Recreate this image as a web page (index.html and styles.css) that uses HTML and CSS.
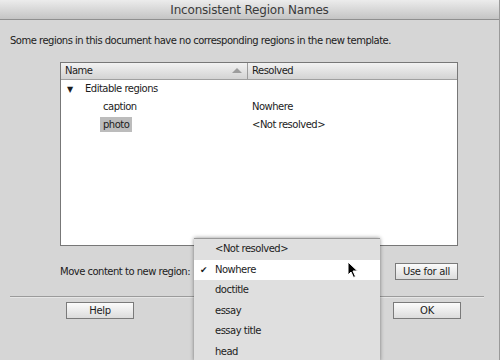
FILE: index.html
```html
<!DOCTYPE html>
<html lang="en">
<head>
    <meta charset="UTF-8">
    <title>Inconsistent Region Names</title>
    <link rel="stylesheet" href="styles.css">
</head>
<body>

<div class="dialog">
    <div class="titlebar">Inconsistent Region Names</div>

    <div class="content">
        <p class="message">Some regions in this document have no corresponding regions in the new template.</p>

        <div class="region-table">
            <div class="table-head">
                <div class="col-name">Name <span class="sort-arrow"></span></div>
                <div class="col-resolved">Resolved</div>
            </div>
            <div class="row group">
                <div class="col-name"><span class="disclosure">&#9660;</span>Editable regions</div>
            </div>
            <div class="row">
                <div class="col-name child">caption</div>
                <div class="col-resolved">Nowhere</div>
            </div>
            <div class="row">
                <div class="col-name child"><span class="selected">photo</span></div>
                <div class="col-resolved">&lt;Not resolved&gt;</div>
            </div>
        </div>

        <div class="move-row">
            <span class="move-label">Move content to new region:</span>
            <button class="btn btn-use">Use for all</button>
        </div>
    </div>

    <div class="separator"></div>

    <div class="footer">
        <button class="btn">Help</button>
        <button class="btn">OK</button>
    </div>
</div>

<!-- popup menu opened from the region select -->
<ul class="popup-menu">
    <li>&lt;Not resolved&gt;</li>
    <li class="checked"><span class="check">&#10004;</span>Nowhere</li>
    <li>doctitle</li>
    <li>essay</li>
    <li>essay title</li>
    <li>head</li>
</ul>

<svg class="cursor" width="12" height="18" viewBox="0 0 12 18">
    <path d="M1 1 L1 14 L4 11 L6.5 16.5 L8.5 15.5 L6 10 L10.5 10 Z" fill="#000" stroke="#fff" stroke-width="1"/>
</svg>

</body>
</html>
```

FILE: styles.css
```css
body {
    margin: 0;
    width: 500px;
    height: 360px;
    overflow: hidden;
    position: relative;
    background: #d6d6d6;
    font-family: "DejaVu Sans", sans-serif;
    font-size: 10px;
    letter-spacing: -0.5px;
    color: #1c1c1c;
}

.dialog {
    height: 360px;
    border-right: 1px solid #9a9a9a;
    box-sizing: border-box;
}

.titlebar {
    height: 20px;
    line-height: 21px;
    text-align: center;
    font-size: 12px;
    letter-spacing: -0.2px;
    color: #3a3a3a;
    background: linear-gradient(to bottom, #ececec, #c4c4c4);
    border-bottom: 1px solid #8f8f8f;
    box-sizing: border-box;
}

.content {
    padding: 14px 0 0 0;
}

.message {
    margin: 0 0 0 10px;
    line-height: 14px;
}

.region-table {
    margin: 14px 0 0 60px;
    width: 398px;
    height: 184px;
    background: #fff;
    border: 1px solid #777;
    box-sizing: border-box;
}

.table-head {
    display: flex;
    height: 17px;
    line-height: 16px;
    background: linear-gradient(to bottom, #f2f2f2, #d3d3d3);
    border-bottom: 1px solid #a0a0a0;
    box-sizing: border-box;
}

.table-head .col-name {
    width: 187px;
    padding-left: 4px;
    border-right: 1px solid #9c9c9c;
    box-sizing: border-box;
    position: relative;
}

.table-head .col-resolved {
    padding-left: 4px;
}

.sort-arrow {
    position: absolute;
    right: 5px;
    top: 5px;
    width: 0;
    height: 0;
    border-left: 5px solid transparent;
    border-right: 5px solid transparent;
    border-bottom: 5px solid #9d9d9d;
}

.row {
    display: flex;
    height: 18px;
    line-height: 18px;
}

.row .col-name {
    width: 191px;
    padding-left: 6px;
    box-sizing: border-box;
}

.row .col-name.child {
    padding-left: 42px;
}

.disclosure {
    display: inline-block;
    width: 18px;
    font-size: 8px;
}

.selected {
    background: #bcbcbc;
    padding: 2px 3px;
    margin-left: -3px;
}

.move-row {
    display: flex;
    justify-content: space-between;
    align-items: center;
    margin: 17px 0 0 60px;
    width: 398px;
    height: 17px;
}

.btn {
    font-family: "DejaVu Sans", sans-serif;
    font-size: 10px;
    letter-spacing: -0.3px;
    color: #1c1c1c;
    height: 17px;
    padding: 0;
    border: 1px solid #7a7a7a;
    background: linear-gradient(to bottom, #fbfbfb, #dcdcdc);
    width: 68px;
}

.btn-use {
    width: 63px;
}

.separator {
    margin: 16px 15px 0 10px;
    border-top: 1px solid #9b9b9b;
    border-bottom: 1px solid #e6e6e6;
}

.footer {
    display: flex;
    justify-content: space-between;
    padding: 4px 38px 0 66px;
}

.popup-menu {
    position: absolute;
    left: 194px;
    top: 238px;
    width: 186px;
    height: 122px;
    overflow: hidden;
    margin: 0;
    padding: 0;
    list-style: none;
    background: #dfdfdf;
    border-top: 1px solid #9a9a9a;
    box-shadow: 0 0 4px rgba(0, 0, 0, 0.45);
    font-size: 10px;
}

.popup-menu li {
    height: 20.6px;
    line-height: 20px;
    padding-left: 21px;
    position: relative;
}

.popup-menu li.checked {
    background: #fff;
}

.check {
    position: absolute;
    left: 6px;
    font-size: 9px;
}

.cursor {
    position: absolute;
    left: 347px;
    top: 261px;
}
```
